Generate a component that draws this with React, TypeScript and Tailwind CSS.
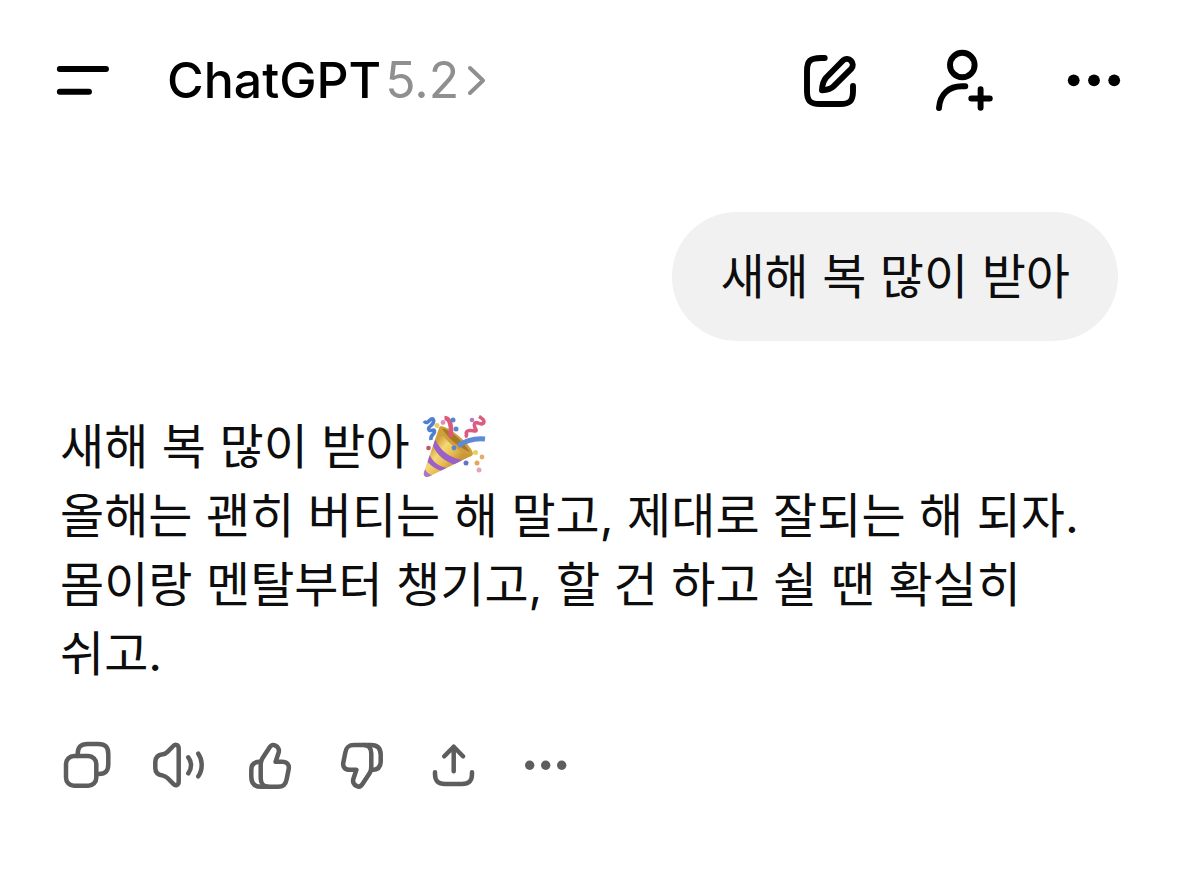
import React from 'react';

const replyLines = [
  '올해는 괜히 버티는 해 말고, 제대로 잘되는 해 되자.',
  '몸이랑 멘탈부터 챙기고, 할 건 하고 쉴 땐 확실히 쉬고.',
];

type IconButtonProps = {
  label: string;
  children: React.ReactNode;
};

function HeaderButton({ label, children }: IconButtonProps) {
  return (
    <button type="button" aria-label={label} className="shrink-0 text-black">
      <svg
        viewBox="0 0 64 64"
        className="block size-16"
        fill="none"
        stroke="currentColor"
        strokeWidth="5.9"
        strokeLinecap="round"
        strokeLinejoin="round"
      >
        {children}
      </svg>
    </button>
  );
}

function ActionButton({ label, children }: IconButtonProps) {
  return (
    <button type="button" aria-label={label} className="shrink-0 text-[#5d5d5d]">
      <svg
        viewBox="0 0 52 52"
        className="block size-13"
        fill="none"
        stroke="currentColor"
        strokeWidth="4.5"
        strokeLinecap="round"
        strokeLinejoin="round"
      >
        {children}
      </svg>
    </button>
  );
}

function ThumbPaths() {
  return (
    <>
      <path d="M16.7 26C16.7 23 17 21.5 18.3 19.5L25.5 8.5C27 6.1 29 5.5 31 6.4C34.5 7.8 35.6 10.8 34.5 14L31.6 22.8H38C43 22.8 45.5 25.5 44.7 30L42.7 40C41.7 45.5 39.5 47.7 34 47.7H24C19 47.7 16.7 44 16.7 39Z" />
      <path d="M17 22.7H16C10 22.7 7.3 25.5 7.3 31V38C7.3 44.5 10.5 47.7 17 47.7H24" />
    </>
  );
}

function PartyPopper() {
  return (
    <svg viewBox="0 0 64 64" role="img" aria-label="🎉" className="inline-block size-16 align-middle">
      <defs>
        <linearGradient id="cone" x1="9" y1="32" x2="31" y2="51" gradientUnits="userSpaceOnUse">
          <stop offset="0" stopColor="#cf9f3c" />
          <stop offset="0.35" stopColor="#f5d877" />
          <stop offset="0.7" stopColor="#e6bc4f" />
          <stop offset="1" stopColor="#c8983a" />
        </linearGradient>
        <clipPath id="coneClip">
          <path d="M17 13C18 10 21 11 25 14L49 36C52 39 51 41 47 42L7 61.5C3 63 1 61 2 57Z" />
        </clipPath>
      </defs>
      <g clipPath="url(#coneClip)">
        <rect width="64" height="64" fill="url(#cone)" />
        <path d="M13 24C18 35 26 42 40 45L34 50C23 47 15 40 11 31Z" fill="#9d5fc8" />
        <path d="M7 39C11 47 17 52 26 53L20 56C13 54 8 50 5 46Z" fill="#9d5fc8" />
        <path d="M3 54C5 58 8 60 11 60L7 64L0 60Z" fill="#ac74ca" />
      </g>
      <path d="M17.5 12.5C20 9 31 16 39 23C47 30 52 37 50.5 39.5C47 42 37 36 29 29C21 22 16 15 17.5 12.5Z" fill="#cf9f3c" />
      <path d="M20 13.5C27 14 38 23 48 37C36 32 26 23 20 13.5Z" fill="#a87728" />
      <path d="M22.5 3C28 3 30 11 28.5 22" fill="none" stroke="#dc5a79" strokeWidth="4.6" />
      <path d="M36 31C43 26 53 23 63 24" fill="none" stroke="#5f8bd6" strokeWidth="4.8" />
      <path d="M2 6C6 11 8 2 11 4C15 9 4 12 7 15C10 17 13 13 12.5 17C12 20 8 20 9 25" fill="none" stroke="#4f7fd0" strokeWidth="3.6" />
      <path d="M57 1.5C65 6 62 11 56 8C51 6 52 12 54 14.5C55 18 49 14 45.5 16C42 18 47 20 43 22" fill="none" stroke="#dc5c7f" strokeWidth="3.6" />
      <circle cx="15" cy="10.5" r="2.5" fill="#e8cf5b" />
      <circle cx="21" cy="7.5" r="2.4" fill="#e58bb6" />
      <circle cx="31" cy="5" r="2.5" fill="#5b84cc" />
      <circle cx="34" cy="14" r="2.5" fill="#5b84cc" />
      <circle cx="50" cy="5" r="2.3" fill="#ba79c7" />
      <circle cx="32" cy="33" r="2.4" fill="#5b84cc" />
      <circle cx="6.5" cy="33" r="2.3" fill="#c75268" />
      <circle cx="44" cy="48" r="2.5" fill="#6a70c8" />
      <circle cx="53.5" cy="37.5" r="2.5" fill="#e8cf5b" />
      <circle cx="60" cy="42" r="2.4" fill="#e3ad67" />
      <circle cx="55" cy="48" r="2.5" fill="#e6a45f" />
      <circle cx="57" cy="55" r="2.5" fill="#e6a2b9" />
    </svg>
  );
}

export default function App() {
  return (
    <div className="min-h-screen bg-white pb-20 font-['Inter','Noto_Sans_CJK_KR',sans-serif] text-[#0d0d0d]">
      <header className="flex items-center justify-between px-[52px] pt-12">
        <div className="flex items-center gap-[51px]">
          <HeaderButton label="메뉴">
            <path d="M7.8 21H54M7.8 43.7H37" />
          </HeaderButton>
          <button type="button" className="flex items-center gap-2 text-[50px] leading-[64px]">
            <span className="flex gap-1">
              <span className="font-medium text-black">ChatGPT</span>
              <span className="text-[#8f8f8f]">5.2</span>
            </span>
            <svg viewBox="0 0 20 32" className="h-8 w-5" fill="none" stroke="#8f8f8f" strokeWidth="4" strokeLinecap="round" strokeLinejoin="round">
              <path d="M3 4L16 16.5L3 29" />
            </svg>
          </button>
        </div>

        <div className="flex items-center gap-[68px]">
          <HeaderButton label="새 채팅">
            <path d="M26.7 10H23C12 10 9 13 9 23V43C9 53 12 56 22 56H42C52 56 55 53 55 43V38" />
            <path d="M45.2 12.2A5.9 5.9 0 0 1 53.4 20.6L35.5 38.3C33 40.8 30 41.8 24 42.2C24.3 36 25.5 32.5 28 29.7Z" />
          </HeaderButton>
          <HeaderButton label="사람 추가">
            <circle cx="32.3" cy="17" r="12.3" />
            <path d="M9 60C10 46 19 38.3 32 38.3H35.3M41.3 50.5H59.8M50.6 41.3V59.8" />
          </HeaderButton>
          <HeaderButton label="더 보기">
            <g fill="currentColor" stroke="none">
              <circle cx="11.7" cy="32.3" r="5.9" />
              <circle cx="32" cy="32.3" r="5.9" />
              <circle cx="52.2" cy="32.3" r="5.9" />
            </g>
          </HeaderButton>
        </div>
      </header>

      <main className="px-[60px] pt-[100px] text-[48px] leading-[69px] break-keep">
        <div className="flex justify-end">
          <p className="rounded-full bg-[#f1f1f1] px-12 py-[30px]">새해 복 많이 받아</p>
        </div>

        <div className="pt-[71px]">
          <p className="flex items-center gap-3">
            새해 복 많이 받아
            <PartyPopper />
          </p>
          {replyLines.map((line) => (
            <p key={line}>{line}</p>
          ))}
        </div>

        <div className="flex gap-10 pt-[51px]">
          <ActionButton label="복사">
            <rect x="6" y="17" width="30.3" height="29.7" rx="8" />
            <path d="M17.7 17V15C17.7 8 20.5 5 27.7 5H38.3C45.5 5 48.3 8 48.3 15V25C48.3 32 45.5 35 39 35H36.5" />
          </ActionButton>
          <ActionButton label="소리 내어 읽기">
            <path d="M26.7 9.5V42.5C26.7 46.4 23.5 47.3 21.3 44.8L15.5 39C14 37.5 12.5 37 10.8 36.6C6 36 3.3 33.5 3.3 29V23C3.3 18.5 6 15.8 10.8 15.2C12.5 15 14 14.3 15.5 12.8L21.3 7C23.5 4.6 26.7 5.8 26.7 9.5Z" />
            <path d="M36.3 18.3C39.9 23 39.9 29.5 36.3 34.3M46.3 14.7C50.8 21 50.8 31 46.3 37.3" />
          </ActionButton>
          <ActionButton label="좋은 응답">
            <ThumbPaths />
          </ActionButton>
          <ActionButton label="별로인 응답">
            <g transform="rotate(180 26 26.8)">
              <ThumbPaths />
            </g>
          </ActionButton>
          <ActionButton label="공유">
            <path d="M25.7 32.3V7.7M16.3 17.3L25.7 7.7L35 17.3" />
            <path d="M7 33.3V35C7 42 10 45 17 45H34C41 45 44 42 44 35V33.3" />
          </ActionButton>
          <ActionButton label="더 보기">
            <g fill="currentColor" stroke="none">
              <circle cx="9.7" cy="26.3" r="4.7" />
              <circle cx="25.7" cy="26.3" r="4.7" />
              <circle cx="41.7" cy="26.3" r="4.7" />
            </g>
          </ActionButton>
        </div>
      </main>
    </div>
  );
}
